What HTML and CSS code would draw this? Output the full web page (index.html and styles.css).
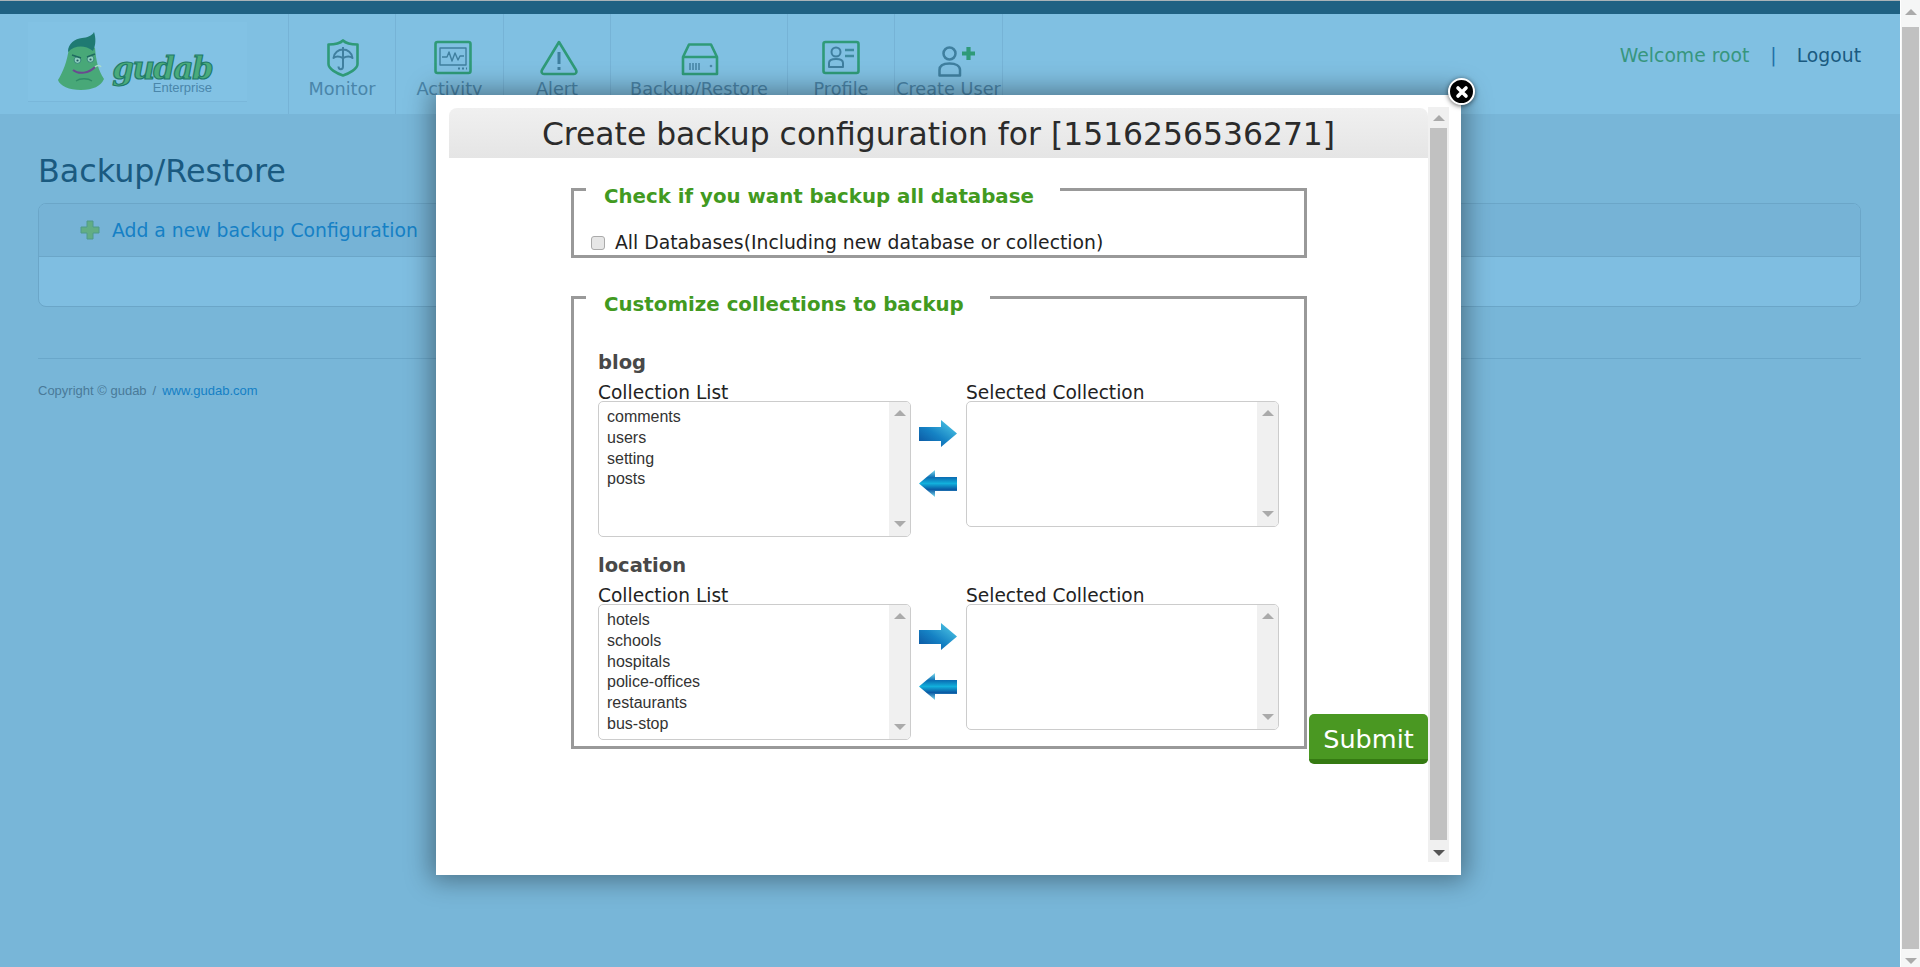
FILE: index.html
```html
<!DOCTYPE html>
<html lang="en">
<head>
<meta charset="utf-8">
<title>gudab - Backup/Restore</title>
<link rel="stylesheet" href="styles.css">
</head>
<body>
<div class="page">
  <div class="topbar"></div>
  <header class="header">
    <a class="logo">
      <svg class="mascot" viewBox="0 0 47 58" width="47" height="58">
        <path d="M12 16C10 30 6 40 1 48C3 54 12 58 24 58C36 58 44 54 47 47C41 38 39 28 38 16C32 10 18 10 12 16Z" fill="#48a878"/>
        <path d="M11 20C11 11 18 7 25 6C30 5.500 35 4 37 0C39 6 39 13 36 19C28 13 18 13 11 20Z" fill="#1f7a72"/>
        <circle cx="20.500" cy="28" r="3.400" fill="#8fcfc0" stroke="#2a7a70" stroke-width=".8"/>
        <circle cx="33.500" cy="27" r="3.400" fill="#8fcfc0" stroke="#2a7a70" stroke-width=".8"/>
        <circle cx="20.500" cy="28.500" r="1.100" fill="#245a66"/>
        <circle cx="33.500" cy="27.500" r="1.100" fill="#245a66"/>
        <path d="M15 23L24 26M38 22L30 25" stroke="#1f6a60" stroke-width="1.600" fill="none"/>
        <path d="M16 38C22 43 32 41 38 35" stroke="#6a4a90" stroke-width="2" fill="none"/>
        <path d="M38 35C40 33 43 33 44 35" stroke="#a8dccb" stroke-width="1.600" fill="none"/>
        <path d="M19 49C23 46 31 46 35 49" stroke="#2f8a66" stroke-width="1.300" fill="none"/>
      </svg>
      <span class="brand">
        <span class="brand-name">gudab</span>
        <span class="brand-sub">Enterprise</span>
      </span>
    </a>
    <nav class="nav">
      <a class="nav-item w107">
        <svg class="nav-icon shift-e" viewBox="0 0 38 38" width="38" height="38">
          <path class="g" d="M19 1.500C22 4.500 27 5.500 33.500 5.500V25C33.500 30 25 34.500 19 36.500C13 34.500 4.500 30 4.500 25V5.500C11 5.500 16 4.500 19 1.500Z"/>
          <path class="t" d="M9.500 19C10 13.500 14.500 10.500 19 10.500C23.500 10.500 28 13.500 28.500 19C26 17 23 17 19 19C15 17 12 17 9.500 19ZM19 8V27.500C19 31 14.500 31 14.500 27.500"/>
        </svg>
        <span>Monitor</span>
      </a>
      <a class="nav-item w108">
        <svg class="nav-icon shift-a" viewBox="0 0 38 38" width="38" height="38">
          <rect class="g" x="1.500" y="3" width="35" height="31" rx="2"/>
          <rect class="t thin" x="6" y="9" width="26" height="17"/>
          <path class="t thin" d="M8 18H13L15 13L18 22L21 14L24 21L26 17H30"/>
          <path class="t" d="M24 29.500H26M28 29.500H30M32 29.500H33"/>
        </svg>
        <span>Activity</span>
      </a>
      <a class="nav-item w107">
        <svg class="nav-icon shift-b" viewBox="0 0 38 38" width="38" height="38">
          <path class="g" d="M19 3L36 31C37 33 36 35 34 35H4C2 35 1 33 2 31Z"/>
          <path class="t wide" d="M19 13V25"/>
          <path class="t wide" d="M19 28V31"/>
        </svg>
        <span>Alert</span>
      </a>
      <a class="nav-item w177">
        <svg class="nav-icon shift-c" viewBox="0 0 38 38" width="38" height="38">
          <path class="g" d="M8 5.500H30L36 18V35H2V18ZM2 18H36"/>
          <path class="t thin" d="M9 24V31M12 24V31M15 24V31M18 24V31"/>
          <circle cx="30" cy="27" r="1.300" fill="#4a88a8"/>
        </svg>
        <span>Backup/Restore</span>
      </a>
      <a class="nav-item w107">
        <svg class="nav-icon" viewBox="0 0 38 38" width="38" height="38">
          <rect class="g" x="1.500" y="3" width="35" height="31" rx="2"/>
          <circle class="t" cx="14" cy="13" r="4.500"/>
          <path class="t" d="M7 28V24C7 21 10 20 14 20C18 20 21 21 21 24V28Z"/>
          <path class="g thick" d="M23 11H32M23 17H32"/>
        </svg>
        <span>Profile</span>
      </a>
      <a class="nav-item w108">
        <svg class="nav-icon shift-d" viewBox="0 0 38 38" width="38" height="38">
          <circle class="t wider" cx="11.500" cy="14.500" r="6"/>
          <path class="t wider" d="M1.500 36.500V31C1.500 27 5 24.500 11.500 24.500C18 24.500 22 27 22 31V36.500Z"/>
          <path class="g plus" d="M30.500 8V21M24 14.500H37"/>
        </svg>
        <span>Create User</span>
      </a>
    </nav>
    <div class="user">
      <span class="welcome">Welcome root</span>
      <span class="sep">|</span>
      <a class="logout">Logout</a>
    </div>
  </header>
  <main class="main">
    <h1 class="page-title">Backup/Restore</h1>
    <section class="panel">
      <div class="panel-head">
        <svg class="plus-icon" viewBox="0 0 20 20" width="20" height="20">
          <path d="M7 1H13V7H19V13H13V19H7V13H1V7H7Z" fill="#62ad84" stroke="#4f9a88" stroke-linejoin="round"/>
        </svg>
        <a class="add-link">Add a new backup Configuration</a>
      </div>
      <div class="panel-body"></div>
    </section>
    <footer class="footer">
      <span>Copyright © gudab</span><span class="slash">/</span><a class="site">www.gudab.com</a>
    </footer>
  </main>
</div>
<div class="page-scroll">
  <span class="arrow-up"></span>
  <div class="page-thumb"></div>
  <span class="arrow-down"></span>
</div>

<div class="modal">
  <a class="close" aria-label="Close">
    <svg viewBox="0 0 14 14" width="14" height="14"><path d="M3 3L11 11M11 3L3 11" stroke="#fff" stroke-width="3.600" stroke-linecap="round"/></svg>
  </a>
  <div class="modal-scroll">
    <div class="modal-content">
      <h2 class="modal-title">Create backup configuration for [1516256536271]</h2>
      <div class="form">
        <fieldset class="box box-all">
          <legend>Check if you want backup all database</legend>
          <label class="check-row"><input type="checkbox"><span>All Databases(Including new database or collection)</span></label>
        </fieldset>
        <div class="form-row">
          <fieldset class="box box-custom">
            <legend>Customize collections to backup</legend>

            <div class="db">
              <h3>blog</h3>
              <div class="db-row">
                <div class="col col-left">
                  <div class="col-label">Collection List</div>
                  <div class="listbox tall">
                    <ul>
                      <li>comments</li>
                      <li>users</li>
                      <li>setting</li>
                      <li>posts</li>
                    </ul>
                    <div class="list-bar"><span class="arrow-up"></span><span class="arrow-down"></span></div>
                  </div>
                </div>
                <div class="moves">
                  <svg class="mv" viewBox="0 0 38 27" width="38" height="27"><use href="#arrow-r"/></svg>
                  <svg class="mv" viewBox="0 0 38 27" width="38" height="27"><use href="#arrow-l"/></svg>
                </div>
                <div class="col col-right">
                  <div class="col-label">Selected Collection</div>
                  <div class="listbox short">
                    <ul></ul>
                    <div class="list-bar"><span class="arrow-up"></span><span class="arrow-down"></span></div>
                  </div>
                </div>
              </div>
            </div>

            <div class="db">
              <h3>location</h3>
              <div class="db-row">
                <div class="col col-left">
                  <div class="col-label">Collection List</div>
                  <div class="listbox tall">
                    <ul>
                      <li>hotels</li>
                      <li>schools</li>
                      <li>hospitals</li>
                      <li>police-offices</li>
                      <li>restaurants</li>
                      <li>bus-stop</li>
                    </ul>
                    <div class="list-bar"><span class="arrow-up"></span><span class="arrow-down"></span></div>
                  </div>
                </div>
                <div class="moves">
                  <svg class="mv" viewBox="0 0 38 27" width="38" height="27"><use href="#arrow-r"/></svg>
                  <svg class="mv" viewBox="0 0 38 27" width="38" height="27"><use href="#arrow-l"/></svg>
                </div>
                <div class="col col-right">
                  <div class="col-label">Selected Collection</div>
                  <div class="listbox short">
                    <ul></ul>
                    <div class="list-bar"><span class="arrow-up"></span><span class="arrow-down"></span></div>
                  </div>
                </div>
              </div>
            </div>
          </fieldset>
          <button class="submit" type="button">Submit</button>
        </div>
      </div>
    </div>
    <div class="modal-bar">
      <span class="arrow-up"></span>
      <div class="modal-thumb"></div>
      <span class="arrow-down dark"></span>
    </div>
  </div>
</div>

<svg class="defs" width="0" height="0">
  <defs>
    <linearGradient id="gr" x1="0" y1="1" x2="1" y2="0">
      <stop offset="0" stop-color="#0a4f9c"/>
      <stop offset=".45" stop-color="#1582c4"/>
      <stop offset="1" stop-color="#58d2ea"/>
    </linearGradient>
    <linearGradient id="gl" x1="0" y1="0" x2="0" y2="1">
      <stop offset="0" stop-color="#7fdcee"/>
      <stop offset=".28" stop-color="#0a6fb4"/>
      <stop offset=".5" stop-color="#12b0dc"/>
      <stop offset=".72" stop-color="#0a5aa4"/>
      <stop offset="1" stop-color="#7fdcee"/>
    </linearGradient>
    <symbol id="arrow-r" viewBox="0 0 38 27">
      <path d="M0 7H22V0L38 13.500L22 27V21H0Z" fill="url(#gr)"/>
    </symbol>
    <symbol id="arrow-l" viewBox="0 0 38 27">
      <path d="M38 7H16V0L0 13.500L16 27V21H38Z" fill="url(#gl)"/>
    </symbol>
  </defs>
</svg>
</body>
</html>
```
FILE: styles.css
```css
* { box-sizing: border-box; }
html, body { margin: 0; height: 967px; overflow: hidden; }
body {
  display: flex;
  background: #78b6d8;
  font-family: "DejaVu Sans", Verdana, sans-serif;
  color: #222;
}
a { text-decoration: none; }
.defs { position: absolute; }

/* page frame */
.page { width: 1900px; flex: none; }
.topbar { height: 14px; background: #1f6183; border-top: 1px solid #a9b3b8; }
.header { height: 100px; background: #80c0e2; display: flex; position: relative; }

.logo {
  width: 219px; height: 80px; margin: 8px 41px 0 28px;
  background: #82c2e4; border-bottom: 1px solid #79b7da;
  display: flex; padding: 10px 0 0 29px;
}
.mascot { flex: none; }
.brand { display: flex; flex-direction: column; align-items: flex-end; margin: 22px 0 0 10px; width: 98px; }
.brand-name {
  font-family: "DejaVu Serif", serif; font-weight: 700; font-style: italic;
  font-size: 31px; line-height: 28px; letter-spacing: -1.6px;
  color: #4aab7b; -webkit-text-stroke: 1.2px #1f7a68;
}
.brand-sub {
  font-family: "Liberation Sans", Arial, sans-serif; font-size: 13px; line-height: 12px;
  color: #4a86aa;
}

.nav { display: flex; border-left: 1px solid #76b3d6; }
.nav-item {
  display: flex; flex-direction: column; align-items: center;
  border-right: 1px solid #76b3d6; padding-top: 25px;
  font-size: 17.7px; line-height: 24px; color: #4a86aa;
}
.w107 { width: 107px; } .w108 { width: 108px; } .w177 { width: 177px; }
.nav-icon { flex: none; }
.shift-a { margin-left: 6px; }
.shift-b { margin-left: 3px; }
.shift-c { margin-left: 2px; }
.shift-d { margin-left: 16px; }
.shift-e { margin-left: 2px; }
.nav-icon .g { fill: none; stroke: #2f9a78; stroke-width: 2.6; stroke-linejoin: round; }
.nav-icon .t { fill: none; stroke: #3f7f9f; stroke-width: 2; stroke-linejoin: round; }
.nav-icon .thin { stroke-width: 1.4; }
.nav-icon .wide { stroke-width: 3; }
.nav-icon .wider { stroke-width: 2.5; }
.nav-icon .thick { stroke-width: 2.4; stroke: #3f8aa0; }
.nav-icon .plus { stroke-width: 4.2; }

.user {
  margin-left: auto; margin-right: 39px; padding-top: 30px;
  font-size: 18.8px; line-height: 24px; display: flex;
}
.welcome { color: #37967e; }
.sep { color: #1f70a8; margin: 0 20px 0 21px; }
.logout { color: #1a5a80; }

/* main */
.main { padding: 0 39px 0 38px; }
.page-title { margin: 40px 0 15px; font-size: 31.8px; line-height: 34px; font-weight: 400; color: #1a5a80; }
.panel { height: 104px; border: 1px solid #6ba6c8; border-radius: 8px; overflow: hidden; background: #7fbee1; }
.panel-head {
  height: 53px; background: #76b3d6; border-bottom: 1px solid #6ba6c8;
  display: flex; align-items: center; padding-left: 41px;
}
.plus-icon { flex: none; margin-right: 12px; }
.add-link { font-size: 18.8px; color: #1580c5; }
.footer {
  margin-top: 51px; border-top: 1px solid #6aa7ca; padding-top: 24px;
  font-family: "Liberation Sans", Arial, sans-serif; font-size: 13px; line-height: 16px; color: #4a7a98;
}
.slash { margin: 0 6px; }
.site { color: #1580c5; }

/* scrollbars */
.page-scroll {
  width: 20px; flex: none; background: #f5f6f6; border-left: 1px solid #fff;
  display: flex; flex-direction: column; align-items: center; padding-top: 9px;
}
.page-thumb { width: 17px; height: 922px; background: #c1c1c1; margin: 12px 0 9px; }
.arrow-up, .arrow-down {
  display: block; width: 0; height: 0; flex: none;
  border-left: 6px solid transparent; border-right: 6px solid transparent;
}
.arrow-up { border-bottom: 6px solid #aaa; }
.arrow-down { border-top: 6px solid #aaa; }
.arrow-down.dark { border-top-color: #555; }

/* modal */
.modal {
  position: absolute; left: 436px; top: 95px; width: 1025px; height: 780px;
  background: #fff; padding: 12px 12px 13px 13px;
  box-shadow: 0 0 24px 5px rgba(0, 0, 0, .38);
}
.close {
  position: absolute; right: -14px; top: -17px; width: 27px; height: 27px;
  background: #000; border: 2px solid #fff; border-radius: 50%;
  box-shadow: 0 1px 5px rgba(0, 0, 0, .6);
  display: flex; align-items: center; justify-content: center;
}
.modal-scroll { height: 755px; display: flex; }
.modal-content { width: 979px; flex: none; }
.modal-bar {
  width: 21px; flex: none; background: #f0f0f0;
  display: flex; flex-direction: column; align-items: center; padding-top: 8px;
}
.modal-thumb { width: 17px; height: 712px; background: #c1c1c1; margin: 7px 0 10px; flex: none; }

.modal-title {
  margin: 1px 0 0; height: 50px;
  background: linear-gradient(#f0f0f0, #e5e5e5); border-radius: 8px 8px 0 0;
  font-size: 31.4px; line-height: 52px; font-weight: 400; text-align: center; color: #2b2b2b;
}
.form { padding-left: 122px; }
.box {
  margin: 0; padding: 0; border: 3px solid #999; min-width: 0; width: 736px;
}
.box legend {
  padding: 15px 26px 0 18px; margin-left: 12px;
  font-size: 19.8px; line-height: 22px; font-weight: 700; color: #429a1f;
}
.box-all { margin-top: 13px; padding-top: 23px; }
.check-row { display: flex; align-items: center; margin-left: 17px; font-size: 18.8px; line-height: 24px; color: #222; }
.check-row input {
  appearance: none; width: 14px; height: 14px; margin: 0 10px 0 0; flex: none;
  background: #e6e6e6; border: 1px solid #aaa; border-radius: 3px;
}
.form-row { display: flex; align-items: flex-end; margin-top: 21px; gap: 2px; }
.box-custom { padding: 35px 0 6px; flex: none; }
.db { margin-left: 24px; }
.db + .db { margin-top: 17px; }
.db h3 { margin: 0 0 10px; font-size: 19.5px; line-height: 24px; font-weight: 700; color: #484848; }
.db-row { display: flex; }
.col-left { width: 313px; }
.col-right { width: 313px; }
.col-label { font-size: 18.6px; line-height: 16px; color: #222; white-space: nowrap; }
.listbox {
  display: flex; border: 1px solid #ccc; border-radius: 5px; overflow: hidden; background: #fff;
}
.tall { height: 136px; }
.short { height: 126px; }
.listbox ul {
  flex: 1; margin: 0; padding: 5px 0 0 8px; list-style: none;
  font-family: "Liberation Sans", Arial, sans-serif; font-size: 16px; line-height: 20.800px; color: #333;
}
.list-bar {
  width: 21px; flex: none; background: #f0f0f0;
  display: flex; flex-direction: column; align-items: center; justify-content: space-between;
  padding: 8px 0 9px;
}
.moves { width: 55px; padding: 35px 0 0 8px; display: flex; flex-direction: column; gap: 23px; flex: none; }
.mv { display: block; flex: none; filter: blur(.4px); }

.submit {
  width: 119px; height: 50px; margin: 0 0 -15px; padding: 4px 0 0;
  background: #4a9822; color: #fff; border: 0; border-bottom: 5px solid #357a12; border-radius: 5px;
  font-family: "DejaVu Sans", Verdana, sans-serif; font-size: 25.5px; flex: none;
}
```
